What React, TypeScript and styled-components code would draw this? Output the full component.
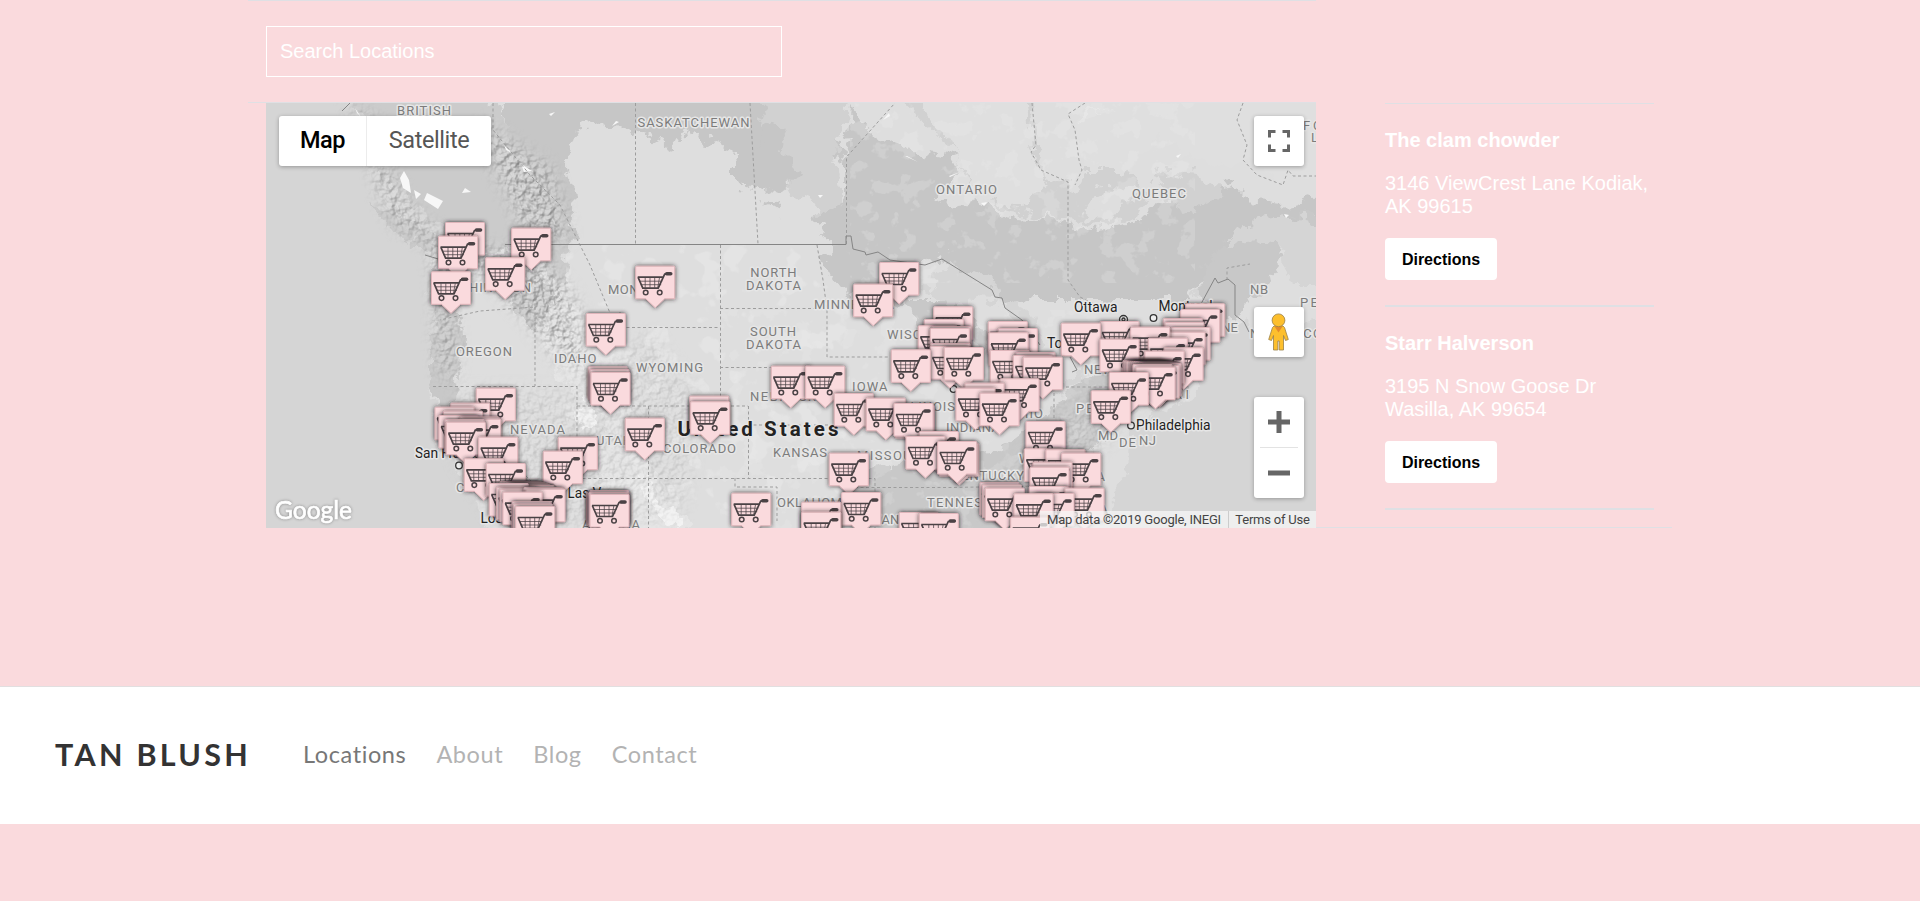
import React from "react";
import styled, { createGlobalStyle } from "styled-components";

const GlobalStyle = createGlobalStyle`
  * { box-sizing: border-box; }
  body { margin: 0; background: #fadadd; font-family: "Liberation Sans", Arial, sans-serif; overflow: hidden; }
  h3, p { margin: 0; }
`;

const line = "#dfe0e4";

const Page = styled.div`
  height: 901px;
  background: #fadadd;
  overflow: hidden;
  display: flex;
  flex-direction: column;
`;
const Locator = styled.section`
  width: 1424px;
  height: 528px;
  margin-left: 248px;
  display: grid;
  grid-template-columns: 1068px 356px;
  grid-template-rows: 103px 425px;
`;
const SearchBar = styled.form`
  border-top: 1px solid ${line};
  border-bottom: 1px solid ${line};
  padding: 25px 0 0 18px;
`;
const SearchInput = styled.input`
  width: 516px;
  height: 51px;
  padding: 0 13px;
  border: 1px solid #fff;
  border-radius: 0;
  background: transparent;
  color: #fff;
  font: 20px "Liberation Sans", Arial, sans-serif;
  outline: none;
  &::placeholder { color: #fff; opacity: 1; }
`;
const MapCell = styled.div`
  grid-column: 1;
  grid-row: 2;
  padding-left: 18px;
`;
const MapCanvas = styled.div`
  position: relative;
  width: 1050px;
  height: 425px;
  overflow: hidden;
  background: #d5d5d5;
  font-family: Roboto, Arial, sans-serif;
  > svg { display: block; }
`;
const Control = styled.div`
  position: absolute;
  background: #fff;
  border-radius: 3px;
  box-shadow: 0 1px 4px rgba(0, 0, 0, 0.3);
`;
const MapTypes = styled(Control)`
  left: 13px;
  top: 13px;
  width: 212px;
  height: 50px;
  display: flex;
`;
const MapType = styled.button<{ $active?: boolean }>`
  width: ${(p) => (p.$active ? 87 : 125)}px;
  padding: 0 0 2px;
  border: 0;
  border-left: ${(p) => (p.$active ? "0" : "1px solid #ececec")};
  background: transparent;
  color: ${(p) => (p.$active ? "#000" : "#565656")};
  font: ${(p) => (p.$active ? 500 : 400)} 23.5px Roboto, Arial, sans-serif;
  letter-spacing: -0.4px;
`;
const SideControls = styled.div`
  position: absolute;
  right: 12px;
  top: 13px;
  width: 50px;
  display: flex;
  flex-direction: column;
`;
const Square = styled(Control)<{ $gap?: number }>`
  position: static;
  height: 50px;
  margin-top: ${(p) => p.$gap || 0}px;
  display: grid;
  place-items: center;
`;
const ZoomBox = styled(Control)`
  position: static;
  height: 101px;
  margin-top: 40px;
  display: flex;
  flex-direction: column;
  align-items: center;
`;
const ZoomKey = styled.div`
  height: 50px;
  display: grid;
  place-items: center;
`;
const ZoomRule = styled.div`
  width: 38px;
  height: 1px;
  background: #e3e3e3;
`;
const Attribution = styled.div`
  position: absolute;
  right: 0;
  bottom: 0;
  height: 17px;
  display: flex;
  background: rgba(245, 245, 245, 0.75);
  color: #444;
  font-size: 13px;
  letter-spacing: -0.22px;
  line-height: 17px;
  white-space: nowrap;
`;
const Credit = styled.span<{ $w: number; $rule?: boolean }>`
  width: ${(p) => p.$w}px;
  text-align: center;
  border-left: ${(p) => (p.$rule ? "1px solid #ccc" : "0")};
`;
const Results = styled.ul`
  grid-column: 2;
  grid-row: 2;
  list-style: none;
  margin: 0;
  padding: 0 18px 0 69px;
  border-bottom: 1px solid ${line};
  overflow: hidden;
`;
const Result = styled.li`
  height: 203px;
  padding-top: 25px;
  border-bottom: 2px solid ${line};
  color: #fff;
  &:first-child { height: 204px; border-top: 1px solid ${line}; }
`;
const Name = styled.h3`
  font-size: 20px;
  line-height: 23px;
`;
const Address = styled.p`
  margin-top: 20px;
  font-size: 20px;
  line-height: 23px;
  white-space: pre-line;
`;
const Directions = styled.button`
  display: block;
  width: 112px;
  height: 42px;
  margin-top: 20px;
  padding: 1px 0 0;
  border: 0;
  border-radius: 4px;
  background: #fff;
  color: #000;
  font: bold 16px "Liberation Sans", Arial, sans-serif;
`;
const Footer = styled.footer`
  height: 138px;
  margin-top: 158px;
  padding: 0 0 4px 55px;
  border-top: 1px solid #e2dfe0;
  background: #fff;
  display: flex;
  align-items: center;
  font-family: Lato, sans-serif;
`;
const Brand = styled.div`
  width: 248px;
  color: #333;
  font-size: 30.5px;
  font-weight: 700;
  letter-spacing: 3.3px;
  line-height: 36px;
`;
const Nav = styled.nav`
  display: flex;
  gap: 30px;
`;
const NavItem = styled.span<{ $active?: boolean }>`
  color: ${(p) => (p.$active ? "#777" : "#b3b3b3")};
  font-size: 23.5px;
  letter-spacing: 0.6px;
  line-height: 30px;
`;

// x, baseline, width, text
type Label = [number, number, number, string];
const regions: Label[] = [
  [397, 115, 54, "BRITISH"], [637.5, 127.3, 112, "SASKATCHEWAN"], [936, 193.7, 61, "ONTARIO"],
  [1132, 198, 54, "QUEBEC"], [750.3, 277, 46.3, "NORTH"], [746, 289.5, 55, "DAKOTA"],
  [814, 308.7, 80, "MINNESOTA"], [608, 294, 66, "MONTANA"], [439, 291.5, 92, "WASHINGTON"],
  [456, 356, 56, "OREGON"], [554, 362.5, 42.5, "IDAHO"], [636, 372, 67, "WYOMING"],
  [510, 433.5, 55, "NEVADA"], [596, 445, 36, "UTAH"], [663, 453, 73, "COLORADO"],
  [750, 336, 46, "SOUTH"], [746, 349, 55, "DAKOTA"], [750, 401, 76, "NEBRASKA"],
  [852, 391, 35.5, "IOWA"], [887, 339, 78, "WISCONSIN"], [898, 411, 57, "ILLINOIS"],
  [946, 432, 54, "INDIANA"], [1009, 418, 34, "OHIO"], [773, 457, 54, "KANSAS"],
  [857, 460, 69, "MISSOURI"], [952, 480, 72, "KENTUCKY"], [927, 507, 81, "TENNESSEE"],
  [777, 507, 74, "OKLAHOMA"], [856, 524, 68, "ARKANSAS"], [456, 492, 88, "CALIFORNIA"],
  [582, 529, 58, "ARIZONA"], [1084, 374, 70, "NEW YORK"], [1076, 413, 40, "PENN"],
  [1098, 440, 20, "MD"], [1119, 447, 17, "DE"], [1139, 445, 17, "NJ"], [1174, 399, 15, "RI"],
  [1250, 294, 18, "NB"], [1198, 332, 40, "MAINE"], [1250, 338, 72, "NOVA SCO"],
  [1300, 307, 18, "PE"], [1303, 130, 19, "FO"], [1311, 142, 16, "LA"],
  [1019, 463, 60, "WEST VI"], [1041, 481, 64, "VIRGINIA"], [1046, 514, 62, "CAROLINA"],
];
const cities: Label[] = [
  [1074, 312, 43.5, "Ottawa"], [1158.5, 311, 54, "Montreal"], [1047, 348, 48, "Toronto"],
  [1136, 430, 74.5, "Philadelphia"], [415, 458, 85, "San Francisco"],
  [480.5, 523, 74, "Los Angeles"], [567.5, 498, 62.5, "Las Vegas"],
];

const pins: [number, number][] = [
  [445.5, 222], [511.7, 227.7], [438.5, 235.7], [485.7, 257.3], [431.5, 271.3], [635.7, 265.7],
  [879.7, 262], [853.7, 283.7], [586.3, 313],
  [588.3, 366.3], [590, 369], [591, 372],
  [476.3, 387.7], [450.7, 402.7], [435, 406.7], [443.5, 410.7], [439, 415], [460, 416.5], [461.7, 418.7],
  [445, 419], [446.3, 421.7], [689.7, 395.7], [690.7, 401.3], [625.3, 417.7], [478.7, 436.7],
  [558.3, 436.7], [543.3, 450.7], [464.3, 458.3], [486.3, 463],
  [500, 481], [503, 481.5], [506, 482], [509, 483], [511, 484], [515, 485], [489.3, 483], [496.7, 486.7], [500, 488.7], [524, 487],
  [526, 488.7], [503, 491.7], [512, 501], [513.5, 503.5], [515.7, 506],
  [586.7, 491.7], [588, 493], [590, 490], [589, 492], [590, 494], [731.7, 492.7],
  [933.7, 306.3], [924.3, 319], [918.3, 325.3], [932, 326], [930.3, 328], [931, 343], [930.3, 346],
  [988.3, 321], [998.3, 328], [989, 332.3], [1100, 321], [1061.3, 322.7],
  [1185.7, 303.3], [1180.7, 309], [1163.3, 318], [1165, 322], [1171, 327], [1166, 331.7], [1130.7, 326.7],
  [1148.3, 337.7], [1100, 338.7], [944.3, 347], [891.3, 349.3], [1164, 347.3], [1145, 350.7],
  [990.3, 350], [1016, 352], [1013.3, 355], [1023.3, 356.7],
  [1123, 360], [1125, 360.5], [1127, 361], [1130, 361], [1132, 361], [1134, 361], [1136, 361.5], [1138, 362], [1140, 362.5], [1142, 363], [1140, 365], [1133, 364], [1136, 366.7],
  [771.3, 365.7], [805.7, 365.7], [1109.3, 372], [1000, 378.3], [965, 382.7], [956, 387.7], [1091.3, 390.3],
  [980, 392.7], [834.3, 393], [866.3, 397.7], [895.5, 405], [894, 403],
  [1026, 421], [919.3, 431], [906, 436], [939.7, 443], [937.7, 441],
  [1024.3, 448.3], [1046, 449.3], [829.3, 452.7], [1061.7, 452.7], [1033, 461.7], [1030, 466.7],
  [980, 482], [982.5, 484.5], [1029.3, 486], [985.3, 487.7], [1065, 487.7], [841.7, 492],
  [1035, 493], [1014, 493.3], [801.7, 501.7], [801.7, 511.7], [899.3, 512], [919.3, 513], [1010.7, 516.7],
];

const Pin = ({ x, y }: { x: number; y: number }) => (
  <g transform={`translate(${x - 0.5} ${y})`}>
    <g filter="url(#pinShadow)">
      <path d="M1.500 .5H38.500Q39.500.5 39.500 1.500V33H29.500L20 42 10.500 33H.5V1.500Q.5.5 1.500.5Z" fill="#fadadd" stroke="#dfb5ba" />
    </g>
    <g fill="none" stroke="#4a4245">
      <path d="M4 15.500H27M5.500 19H26M10 12V22M14.800 12V22M19.500 12V22M24.300 12 22.500 22" strokeWidth="1" opacity=".75" />
      <path d="M2.500 11.500H28M2.800 11.500 7.600 22.500H23L29.500 8.500H36" strokeWidth="1.700" />
      <path d="M31.500 8H35.500" strokeWidth="3.600" strokeLinecap="round" />
      <circle cx="10.500" cy="26.800" r="2.300" strokeWidth="1.500" />
      <circle cx="24.500" cy="26.800" r="2.300" strokeWidth="1.500" />
    </g>
  </g>
);

const Terrain = () => (
  <g>
    <rect x="266" y="103" width="1050" height="425" fill="#d5d5d5" />
    <g filter="url(#rough)">
      {/* mainland */}
      <path fill="#dedede" d="M345 90 375 125 378 170 405 200 430 215 455 240 432 262 434 317 430 370 433 405 446 450 458 475 480 505 490 540H1100L1112 505 1122 480 1130 455 1132 425 1155 412 1192 402 1202 390 1188 362 1212 335 1245 320 1252 342 1330 320V285L1290 285 1282 250 1262 243 1235 262 1205 292 1195 300 1210 265 1245 222 1330 213V90Z" />
      <path fill="#c8c8c8" d="M374 203 400 212 428 235 440 256 424 251 392 228Z" />
      <path fill="#cbcbcb" d="M345 90 375 125 378 170 405 200 440 225 470 250 540 250 560 300 570 245 575 200 550 180 510 140 500 103 470 90Z" />
      <path fill="#c6c6c6" d="M500 85H700L760 103 790 115 830 120 845 160 800 140 775 150 765 185 750 192 730 170 735 150 700 140 690 125 672 150 655 140 600 120 575 130 565 160 575 190 572 240 550 235 530 185 510 150Z" />
      <path fill="#d1d1d1" d="M752 85H850L835 160 842 200 830 240 812 205 790 195 775 160Z" />
      <path fill="#c6c6c6" d="M770 120 785 130 780 150 795 165 800 180 780 190 758 185 752 160ZM762 200 782 203 780 212ZM815 215 846 200 850 250 828 240ZM850 105 870 130 885 140 930 155 962 160 955 180 935 190 945 205 980 200 1000 215 1050 220 1090 230 1130 225 1160 205 1200 190 1235 185 1250 200 1290 205 1330 195V213L1245 222 1210 265 1190 300 1130 300 1090 300 1030 300 1015 310 995 292 943 258 915 266 905 300 870 310 840 290 822 260 846 235 846 160Z" />
      <path fill="#d1d1d1" d="M895 85 920 120 960 155 965 180 1000 210 1060 220 1120 215 1140 180 1120 165 1130 140 1100 110 1080 190 1050 180 1035 150 1030 85ZM1150 170 1200 175 1225 195 1180 215ZM1100 185 1150 190 1135 220 1080 225Z" />
      <path fill="#dfdfdf" d="M900 85 940 130 960 155 968 180 985 200 1020 210 1050 185 1030 155 1025 85ZM1070 85 1085 170 1120 170 1160 135 1180 155 1230 165 1260 160 1275 180 1330 175V85Z" />
      <path fill="#c8c8c8" d="M436 270 455 280 460 340 455 400 440 420 430 380 434 315ZM490 255 535 265 560 310 580 370 560 340 520 320ZM1200 275 1220 245 1270 240 1284 258 1260 290 1235 315 1210 330ZM1292 212 1330 216V235ZM905 300 960 300 990 340 960 380 920 330ZM1080 380 1190 350 1185 395 1120 410 1080 470 1070 540 960 540 900 510 870 470 940 455 1000 450 1050 410ZM850 470 940 455 960 540 830 540Z" />
      <path fill="#d5d5d5" d="M925 290 950 263 990 280 1005 300 980 297 950 306ZM950 320 970 315 975 380 960 395 952 370ZM1005 300 1035 315 1045 345 1020 350 1010 325ZM1040 390 1100 360 1095 370 1050 398ZM1070 360 1115 345 1110 355 1075 367Z" />
      <path fill="#e6e6e6" d="M550 300 600 320 640 440 620 460 600 410 560 380 540 330ZM590 440 640 450 690 528 640 530 600 490ZM1118 110 1090 115 1078 120 1085 112Z" opacity=".8" />
      <path fill="#f3f3f3" d="M584 396 592 405 590 422 583 430 578 415ZM640 475 655 500 680 512 675 528 650 505Z" />
    </g>
    <rect x="566" y="245" width="284" height="275" filter="url(#lightSpecks)" opacity=".25" />
    <rect x="850" y="103" width="345" height="180" filter="url(#forestSpecks)" opacity=".22" />
    <rect x="720" y="310" width="380" height="218" filter="url(#forestSpecks)" opacity=".18" />
    <g filter="url(#relief)" opacity=".42">
      <path d="M345 103 380 125 385 165 410 210 450 245 540 255 575 300 590 380 560 360 520 310 480 265 450 290 455 370 440 380 436 270 430 240 395 225 378 185 370 140ZM475 120 550 170 568 240 530 240Z" />
    </g>
    <g filter="url(#relief)" opacity=".13">
      <path d="M455 390 575 390 650 330 700 400 680 520 500 528 455 460ZM1060 410 1150 370 1150 385 1100 450 1020 520 980 510Z" />
    </g>
    <path fill="#f7f7f7" d="M404 171 409 180 411 193 403 188 400 178ZM414 190 421 194 416 199ZM427 193 443 201 438 209 424 200ZM465 188 471 192 462 193ZM890 116 883 120 889 113ZM905 156 918 162 907 156ZM949 176 960 172 950 177ZM981 203 988 202 984 206ZM549 114 555 112 551 116ZM355 108 361 117 357 113ZM504 145 512 153 506 150ZM521 164 532 171 524 172ZM616 121 612 126 619 122ZM818 195 823 195 820 198ZM1176 156 1181 154 1178 158ZM1284 214 1289 215 1286 218Z" />
    <g fill="none" stroke="#9d9d9d" strokeDasharray="3 2.500" strokeWidth="1">
      <path d="M635.500 103V244M750 103 758 244M846.500 244V157L895 103M493 103V130L530 175 560 205 590 265 615 325M535 265V307L480 311 440 320M535 307V386M433 386.500H577M577 386V406M620 312V327.500H720M720.500 245V406M720 308.500H815M720 367.500H820L840 375M577 406H748M577 406V478M648.500 406V528M748.500 406V478M748 425H840M577 478.500H875V528M490 386V440L565 515M817 245 823 280 827 310 827 357H890M735 478V487H777V521M855 487.500H950L1100 485M1054 360V420M1066 387H1110M950 430V480M1032 103 1036 145 1031 152 1041 170 1068 182V280L1080 297 1110 312M1085 103 1068 114 1075 130 1079 160 1082 170 1075 185M1243 103 1237 120 1247 145 1243 160 1257 175 1283 185 1288 170 1293 176H1316M1227 280V268L1250 264" />
    </g>
    <g fill="none" stroke="#858585" strokeWidth="1">
      <path d="M505 244.500H846V236H851L853 249 865 252 866 255 878 252 890 260 925 265 942 259 992 290 995 297 1002 298 1005 308 1022 320 1040 345M1072 372 1077 370 1070 357M1195 315 1215 278 1218 283 1228 279 1235 285V315L1244 322 1249 332M425 255 445 261M342 111 350 103" />
    </g>
  </g>
);

const MapDrawing = () => (
  <svg width="1050" height="425" viewBox="266 103 1050 425">
    <defs>
      <filter id="rough" x="-5%" y="-5%" width="110%" height="110%">
        <feTurbulence type="fractalNoise" baseFrequency=".07" numOctaves="4" seed="4" />
        <feDisplacementMap in="SourceGraphic" scale="24" xChannelSelector="R" yChannelSelector="G" />
      </filter>
      <filter id="forestSpecks" x="0" y="0" width="100%" height="100%">
        <feTurbulence type="fractalNoise" baseFrequency=".05" numOctaves="4" seed="11" />
        <feColorMatrix values="0 0 0 0 .87 0 0 0 0 .87 0 0 0 0 .87 14 0 0 0 -8" />
      </filter>
      <filter id="lightSpecks" x="0" y="0" width="100%" height="100%">
        <feTurbulence type="fractalNoise" baseFrequency=".04" numOctaves="3" seed="23" />
        <feColorMatrix values="0 0 0 0 .92 0 0 0 0 .92 0 0 0 0 .92 14 0 0 0 -8" />
      </filter>
      <filter id="relief" x="-5%" y="-5%" width="110%" height="110%" colorInterpolationFilters="sRGB">
        <feGaussianBlur in="SourceAlpha" stdDeviation="9" result="area" />
        <feTurbulence type="fractalNoise" baseFrequency=".17" numOctaves="4" seed="8" result="noise" />
        <feDiffuseLighting in="noise" surfaceScale="3.500" diffuseConstant="1" lightingColor="#f0f0f0">
          <feDistantLight azimuth="225" elevation="58" />
        </feDiffuseLighting>
        <feComposite in2="area" operator="in" />
      </filter>
      <filter id="pinShadow" x="-25%" y="-25%" width="150%" height="150%">
        <feDropShadow dx="0" dy="0" stdDeviation="2.300" floodColor="#2c2325" floodOpacity=".95" />
      </filter>
    </defs>
    <Terrain />
    <g fontSize="13" fill="#7c7c7c" stroke="#e6e6e6" strokeWidth="3" strokeLinejoin="round" paintOrder="stroke">
      {regions.map(([x, y, w, t], i) => (
        <text key={i} x={x} y={y} textLength={w}>{t}</text>
      ))}
    </g>
    <g fontSize="13.800" fill="#222" stroke="#e6e6e6" strokeWidth="3" strokeLinejoin="round" paintOrder="stroke">
      {cities.map(([x, y, w, t], i) => (
        <text key={i} x={x} y={y} textLength={w}>{t}</text>
      ))}
      <text x="677.500" y="436" fontSize="20.500" fontWeight="700" textLength="161">United States</text>
    </g>
    <g fill="#eee" stroke="#333" strokeWidth="1.300">
      <circle cx="1123.500" cy="319.500" r="4" />
      <circle cx="1123.500" cy="319.500" r="1.500" />
      <circle cx="1153.500" cy="318" r="3.300" />
      <circle cx="1131" cy="425.500" r="3.300" />
      <circle cx="459" cy="465.500" r="3.300" />
      <circle cx="953.500" cy="389" r="3.300" />
    </g>
    {pins.map(([x, y], i) => <Pin key={i} x={x} y={y} />)}
    <text x="275" y="519" fontFamily="Lato, sans-serif" fontSize="25.500" fill="#fff" stroke="#fff" strokeWidth=".7" textLength="77" lengthAdjust="spacingAndGlyphs" style={{ filter: "drop-shadow(0 0 1.5px #888)" }}>Google</text>
  </svg>
);

const results = [
  { name: "The clam chowder", address: "3146 ViewCrest Lane Kodiak,\nAK 99615" },
  { name: "Starr Halverson", address: "3195 N Snow Goose Dr\nWasilla, AK 99654" },
];

export default function App() {
  return (
    <Page>
      <GlobalStyle />
      <Locator>
        <SearchBar>
          <SearchInput placeholder="Search Locations" />
        </SearchBar>
        <MapCell>
          <MapCanvas>
            <MapDrawing />
            <MapTypes>
              <MapType $active>Map</MapType>
              <MapType>Satellite</MapType>
            </MapTypes>
            <SideControls>
              <Square>
                <svg width="22" height="22" fill="none" stroke="#666" strokeWidth="3">
                  <path d="M1.500 7.500V1.500H7.500M14.500 1.500H20.500V7.500M20.500 14.500V20.500H14.500M7.500 20.500H1.500V14.500" />
                </svg>
              </Square>
              <Square $gap={141}>
                <svg width="22" height="38" viewBox="0.5 0 22 38" fill="#fdbf2d" stroke="#9a8048" strokeWidth=".8">
                  <path d="M6.500 13H15.500L17 14.500 20.800 26.500 18 27.500 16 22.500V37H11.700V28H10.300V37H6V22.500L4 27.500 1.200 26.500 5 14.500Z" />
                  <path d="M7 13.500H15L11 19.500Z" fill="#e58a2b" stroke="none" />
                  <circle cx="11" cy="7.300" r="6.400" />
                </svg>
              </Square>
              <ZoomBox>
                <ZoomKey>
                  <svg width="22" height="22" stroke="#666" strokeWidth="5"><path d="M0 11H22M11 0V22" /></svg>
                </ZoomKey>
                <ZoomRule />
                <ZoomKey>
                  <svg width="22" height="22" stroke="#666" strokeWidth="5"><path d="M0 11H22" /></svg>
                </ZoomKey>
              </ZoomBox>
            </SideControls>
            <Attribution>
              <Credit $w={188}>Map data ©2019 Google, INEGI</Credit>
              <Credit $w={88} $rule>Terms of Use</Credit>
            </Attribution>
          </MapCanvas>
        </MapCell>
        <Results>
          {results.map((r) => (
            <Result key={r.name}>
              <Name>{r.name}</Name>
              <Address>{r.address}</Address>
              <Directions>Directions</Directions>
            </Result>
          ))}
        </Results>
      </Locator>
      <Footer>
        <Brand>TAN BLUSH</Brand>
        <Nav>
          <NavItem $active>Locations</NavItem>
          <NavItem>About</NavItem>
          <NavItem>Blog</NavItem>
          <NavItem>Contact</NavItem>
        </Nav>
      </Footer>
    </Page>
  );
}
